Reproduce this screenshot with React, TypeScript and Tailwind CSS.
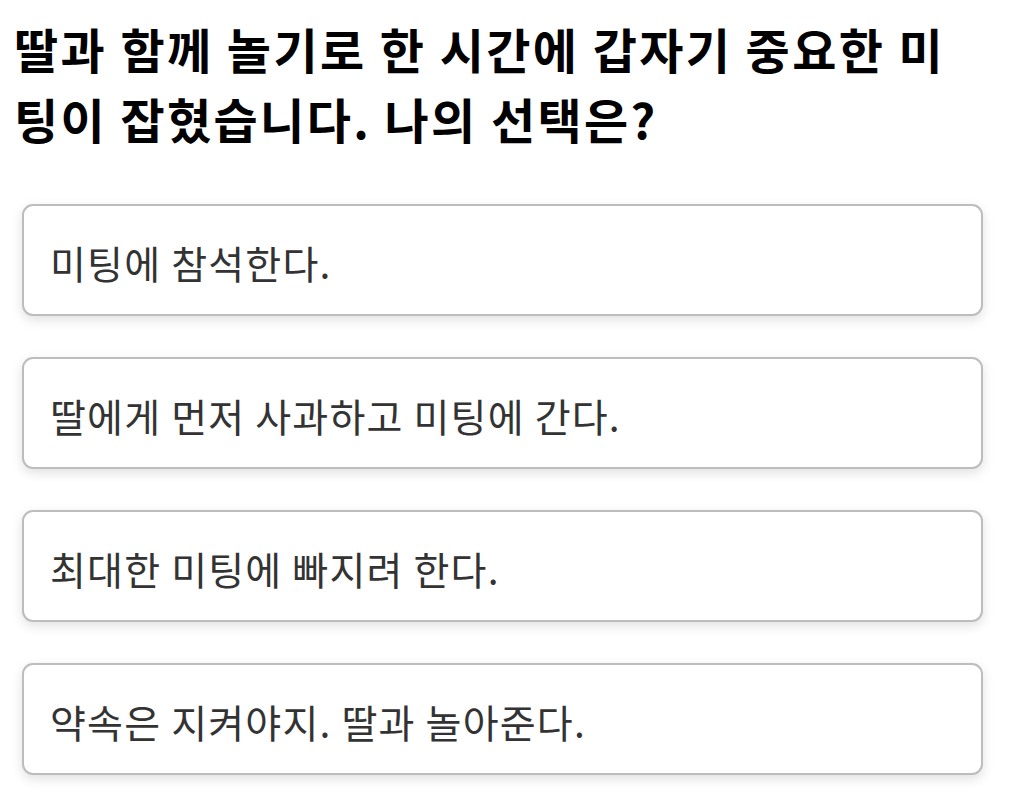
const options = [
  '미팅에 참석한다.',
  '딸에게 먼저 사과하고 미팅에 간다.',
  '최대한 미팅에 빠지려 한다.',
  '약속은 지켜야지. 딸과 놀아준다.',
]

export default function App() {
  return (
    <div
      className="min-h-[811px] w-[1011px] bg-white"
      style={{ fontFamily: '"Noto Sans CJK KR", "Noto Sans", sans-serif' }}
    >
      <h1 className="w-[979px] pl-[14px] pt-[13px] text-[48px] font-bold leading-[70px] tracking-[2.4px] text-black">
        딸과 함께 놀기로 한 시간에 갑자기 중요한 미팅이 잡혔습니다. 나의 선택은?
      </h1>

      <div className="mt-[51px] flex w-[983px] flex-col gap-[41px] pl-[22px]">
        {options.map((text) => (
          <button
            key={text}
            type="button"
            className="flex h-[112px] w-[961px] items-center rounded-[11px] border-2 border-[#bdbdbd] bg-white px-[26px] pt-[4px] text-left text-[39px] tracking-[1.2px] text-[#333333] shadow-[0_4px_12px_rgba(0,0,0,0.12)]"
          >
            {text}
          </button>
        ))}
      </div>
    </div>
  )
}
